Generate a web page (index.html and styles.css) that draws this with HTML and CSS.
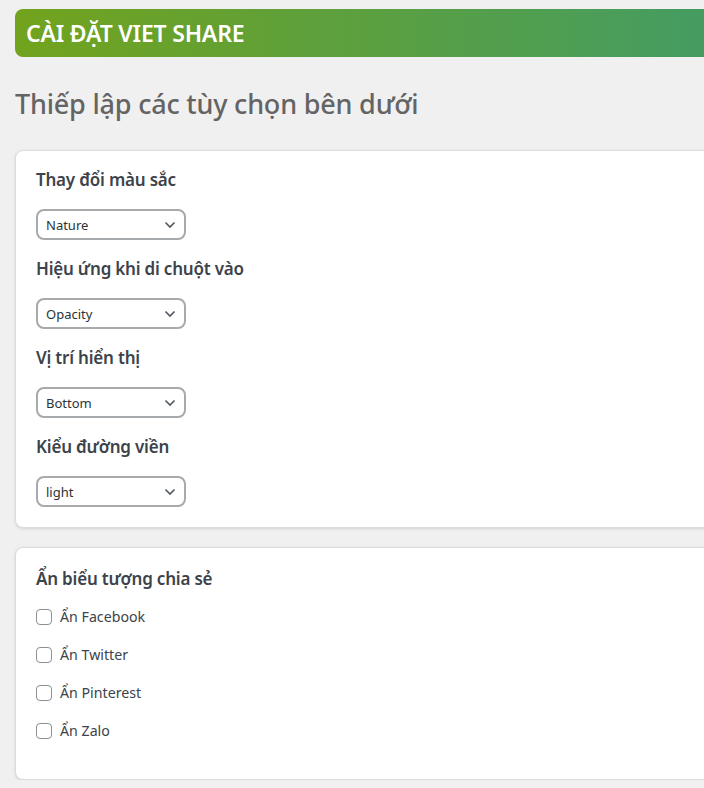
FILE: index.html
```html
<!DOCTYPE html>
<html lang="vi">
<head>
<meta charset="utf-8">
<title>Cài đặt Viet Share</title>
<link rel="stylesheet" href="styles.css">
</head>
<body>
<div class="wrap">
  <div class="topbar">CÀI ĐẶT VIET SHARE</div>
  <h1 class="title">Thiếp lập các tùy chọn bên dưới</h1>

  <div class="card">
    <div class="field">
      <div class="label">Thay đổi màu sắc</div>
      <div class="select-wrap">
        <select class="select"><option>Nature</option></select>
        <svg class="chev" width="12" height="8" viewBox="0 0 12 8"><path d="M1.5 1.5 L6 6 L10.5 1.5" fill="none" stroke="#50575e" stroke-width="1.6"/></svg>
      </div>
    </div>
    <div class="field">
      <div class="label">Hiệu ứng khi di chuột vào</div>
      <div class="select-wrap">
        <select class="select"><option>Opacity</option></select>
        <svg class="chev" width="12" height="8" viewBox="0 0 12 8"><path d="M1.5 1.5 L6 6 L10.5 1.5" fill="none" stroke="#50575e" stroke-width="1.6"/></svg>
      </div>
    </div>
    <div class="field">
      <div class="label">Vị trí hiển thị</div>
      <div class="select-wrap">
        <select class="select"><option>Bottom</option></select>
        <svg class="chev" width="12" height="8" viewBox="0 0 12 8"><path d="M1.5 1.5 L6 6 L10.5 1.5" fill="none" stroke="#50575e" stroke-width="1.6"/></svg>
      </div>
    </div>
    <div class="field">
      <div class="label">Kiểu đường viền</div>
      <div class="select-wrap">
        <select class="select"><option>light</option></select>
        <svg class="chev" width="12" height="8" viewBox="0 0 12 8"><path d="M1.5 1.5 L6 6 L10.5 1.5" fill="none" stroke="#50575e" stroke-width="1.6"/></svg>
      </div>
    </div>
  </div>

  <div class="card card-checks">
    <div class="label">Ẩn biểu tượng chia sẻ</div>
    <div class="checks">
      <label class="check"><input type="checkbox" class="box"><span>Ẩn Facebook</span></label>
      <label class="check"><input type="checkbox" class="box"><span>Ẩn Twitter</span></label>
      <label class="check"><input type="checkbox" class="box"><span>Ẩn Pinterest</span></label>
      <label class="check"><input type="checkbox" class="box"><span>Ẩn Zalo</span></label>
    </div>
  </div>
</div>
</body>
</html>
```

FILE: styles.css
```css
html, body {
  margin: 0;
  padding: 0;
  background: #f0f0f1;
  overflow: hidden;
}
body {
  font-family: "Noto Sans", "Open Sans", sans-serif;
  color: #3c434a;
}
.wrap {
  width: 740px;
  padding: 9px 0 0 15px;
}
.topbar {
  height: 48px;
  box-sizing: border-box;
  padding: 0 0 0 11px;
  display: flex;
  align-items: center;
  border-radius: 8px;
  background: linear-gradient(to right, #72a31d 0%, #449c63 95%);
  color: #fff;
  font-weight: 600;
  font-size: 23px;
  letter-spacing: -0.2px;
}
.title {
  margin: 27px 0 0;
  height: 66px;
  font-size: 27px;
  font-weight: 500;
  line-height: 40px;
  color: #646464;
  letter-spacing: -0.2px;
}
.card {
  background: #fff;
  border: 1px solid #dcdcde;
  border-radius: 8px;
  box-shadow: 0 1px 3px rgba(0,0,0,0.12);
  padding: 14px 20px 20px;
}
.field + .field {
  margin-top: 14px;
}
.label {
  font-size: 17px;
  font-weight: 600;
  line-height: 30px;
  color: #3c434a;
  letter-spacing: -0.2px;
}
.select-wrap {
  position: relative;
  width: 150px;
  margin-top: 14px;
}
.select {
  appearance: none;
  -webkit-appearance: none;
  display: block;
  width: 150px;
  height: 31px;
  box-sizing: border-box;
  border: 2px solid #a7aaad;
  border-radius: 8px;
  background: #fff;
  padding: 0 24px 0 8px;
  font-family: "Noto Sans", "Open Sans", sans-serif;
  font-size: 13px;
  color: #2c3338;
}
.chev {
  position: absolute;
  right: 10px;
  top: 12px;
  pointer-events: none;
}
.card-checks {
  margin-top: 19px;
  padding-top: 16px;
  padding-bottom: 37px;
}
.checks {
  margin-top: 12px;
  display: flex;
  flex-direction: column;
  gap: 16px;
}
.check {
  display: flex;
  align-items: center;
  gap: 8px;
  font-size: 14.2px;
  line-height: 22px;
  color: #3c434a;
}
.box {
  appearance: none;
  -webkit-appearance: none;
  width: 16px;
  height: 16px;
  margin: 0;
  border: 1px solid #8c8f94;
  border-radius: 4px;
  background: #fff;
  box-sizing: border-box;
}
```
